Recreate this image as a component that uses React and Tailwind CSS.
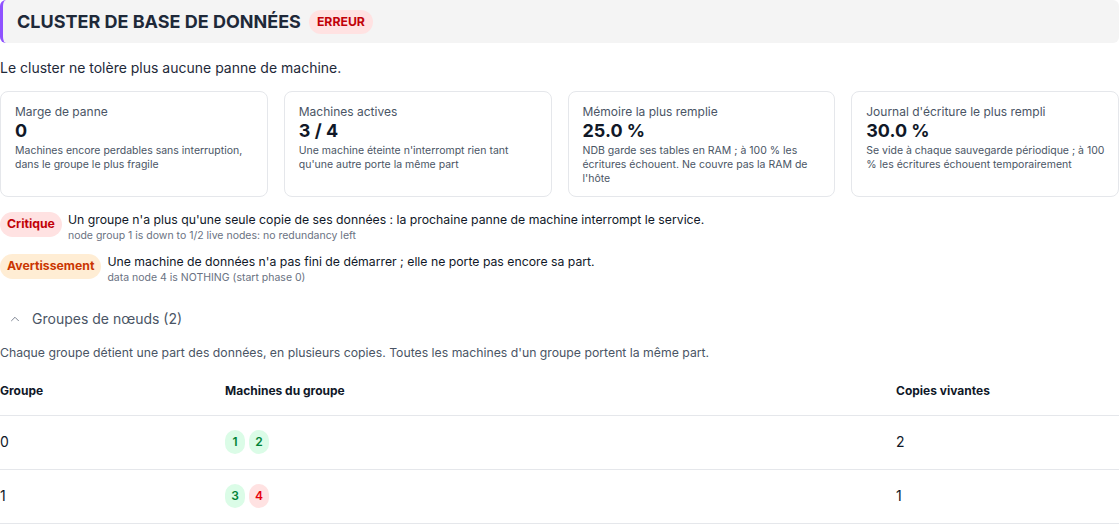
import { ChevronUp } from "lucide-react";

const stats = [
  {
    label: "Marge de panne",
    value: "0",
    hint: "Machines encore perdables sans interruption, dans le groupe le plus fragile",
  },
  {
    label: "Machines actives",
    value: "3 / 4",
    hint: "Une machine éteinte n'interrompt rien tant qu'une autre porte la même part",
  },
  {
    label: "Mémoire la plus remplie",
    value: "25.0 %",
    hint: "NDB garde ses tables en RAM ; à 100 % les écritures échouent. Ne couvre pas la RAM de l'hôte",
  },
  {
    label: "Journal d'écriture le plus rempli",
    value: "30.0 %",
    hint: "Se vide à chaque sauvegarde périodique ; à 100 % les écritures échouent temporairement",
  },
];

const alerts = [
  {
    level: "Critique",
    pill: "bg-red-100 text-red-700",
    message:
      "Un groupe n'a plus qu'une seule copie de ses données : la prochaine panne de machine interrompt le service.",
    detail: "node group 1 is down to 1/2 live nodes: no redundancy left",
  },
  {
    level: "Avertissement",
    pill: "bg-orange-100 text-orange-700",
    message: "Une machine de données n'a pas fini de démarrer ; elle ne porte pas encore sa part.",
    detail: "data node 4 is NOTHING (start phase 0)",
  },
];

const groups = [
  { id: 0, nodes: [{ id: 1, up: true }, { id: 2, up: true }], live: 2 },
  { id: 1, nodes: [{ id: 3, up: true }, { id: 4, up: false }], live: 1 },
];

function StatCard({ label, value, hint }) {
  return (
    <div className="border border-gray-200 rounded-lg pl-3.5 pr-3 pt-[11px] pb-[10px] min-h-[106px]">
      <div className="text-xs leading-[17px] text-gray-600">{label}</div>
      <div className="text-lg leading-[22px] font-bold text-gray-900">{value}</div>
      <div className="text-[10.5px] leading-[14px] text-gray-600 mt-[2px]">{hint}</div>
    </div>
  );
}

function NodeBadge({ node }) {
  return (
    <span
      className={
        node.up
          ? "inline-flex items-center justify-center h-6 min-w-[20px] px-1.5 rounded-full bg-green-100 text-green-700 text-xs font-semibold"
          : "inline-flex items-center justify-center h-6 min-w-[20px] px-1.5 rounded-full bg-red-100 text-red-600 text-xs font-semibold"
      }
    >
      {node.id}
    </span>
  );
}

export default function App() {
  return (
    <div className="bg-white text-gray-900" style={{ fontFamily: "Inter, 'Noto Sans', sans-serif" }}>
      <div className="h-[43px] bg-[#f4f4f4] border-l-[3px] border-violet-500 rounded-md flex items-center gap-2 pl-[14px]">
        <h1 className="text-lg font-bold text-gray-800 uppercase">Cluster de base de données</h1>
        <span className="bg-red-100 text-red-700 text-[12.25px] font-bold px-2 py-1 rounded-full leading-4">ERREUR</span>
      </div>

      <p className="mt-[15px] text-sm leading-5 text-gray-800">
        Le cluster ne tolère plus aucune panne de machine.
      </p>

      <div className="grid grid-cols-4 gap-4 mt-[13px]">
        {stats.map((s) => (
          <StatCard key={s.label} {...s} />
        ))}
      </div>

      <div className="mt-[15px] flex flex-col gap-[11px]">
        {alerts.map((a) => (
          <div key={a.level} className="flex items-start gap-1.5">
            <span className={`${a.pill} text-[12.25px] font-bold px-[7px] h-[25px] flex items-center rounded-full`}>
              {a.level}
            </span>
            <div>
              <div className="text-[12.25px] leading-4 text-gray-900">{a.message}</div>
              <div className="text-[10.5px] leading-[14px] mt-px text-gray-500">{a.detail}</div>
            </div>
          </div>
        ))}
      </div>

      <button className="mt-5 flex items-center gap-2.5 pl-2 h-7 text-sm text-gray-600">
        <ChevronUp size={14} strokeWidth={1.5} className="text-gray-500" />
        Groupes de nœuds (2)
      </button>

      <p className="mt-3 text-[12.25px] leading-4 text-gray-600">
        Chaque groupe détient une part des données, en plusieurs copies. Toutes les machines d'un groupe portent la même part.
      </p>

      <table className="w-full mt-1.5 text-left border-collapse">
        <thead>
          <tr className="border-b border-gray-200">
            <th className="w-[225px] h-12 text-xs font-bold text-gray-900">Groupe</th>
            <th className="w-[671px] text-xs font-bold text-gray-900">Machines du groupe</th>
            <th className="text-xs font-bold text-gray-900">Copies vivantes</th>
          </tr>
        </thead>
        <tbody>
          {groups.map((g) => (
            <tr key={g.id} className="border-b border-gray-200">
              <td className="h-[54px] text-sm">{g.id}</td>
              <td>
                <div className="flex gap-1">
                  {g.nodes.map((n) => (
                    <NodeBadge key={n.id} node={n} />
                  ))}
                </div>
              </td>
              <td className="text-sm">{g.live}</td>
            </tr>
          ))}
        </tbody>
      </table>
    </div>
  );
}
